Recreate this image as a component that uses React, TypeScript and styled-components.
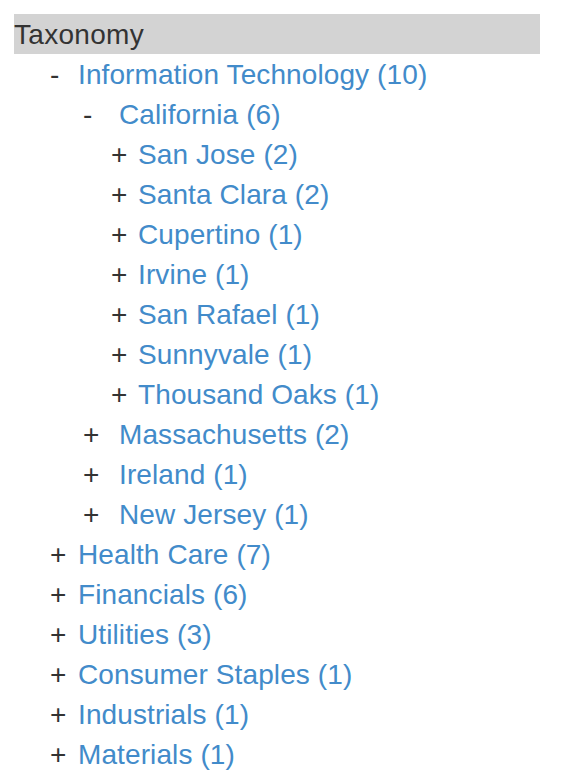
import React from "react";
import styled, { createGlobalStyle } from "styled-components";

const Global = createGlobalStyle`
  html, body { margin: 0; padding: 0; background: #fff; }
  body { font-family: "Liberation Sans", Arial, Helvetica, sans-serif; color: #333; }
`;

const Page = styled.div`
  padding: 14px;
`;

const Header = styled.div`
  width: 526px;
  height: 40px;
  line-height: 41px;
  background: #d3d3d3;
  color: #333;
  font-size: 28px;
  letter-spacing: 0.3px;
`;

const List = styled.ul`
  list-style: none;
  margin: 1px 0 0;
  padding: 0;
`;

const indents: Record<number, { left: number; toggle: number }> = {
  1: { left: 36, toggle: 28 },
  2: { left: 69, toggle: 36 },
  3: { left: 97, toggle: 27 },
};

const Row = styled.li<{ $level: number }>`
  display: flex;
  align-items: center;
  height: 40px;
  line-height: 40px;
  font-size: 28px;
  letter-spacing: 0.1px;
  padding-left: ${(p) => indents[p.$level].left}px;
`;

const Toggle = styled.span<{ $level: number }>`
  display: inline-block;
  width: ${(p) => indents[p.$level].toggle}px;
  flex: none;
  color: #333;
`;

const Label = styled.a`
  color: #428bca;
  text-decoration: none;
  white-space: nowrap;
`;

type Node = { label: string; count: number; level: number; open?: boolean };

const nodes: Node[] = [
  { label: "Information Technology", count: 10, level: 1, open: true },
  { label: "California", count: 6, level: 2, open: true },
  { label: "San Jose", count: 2, level: 3 },
  { label: "Santa Clara", count: 2, level: 3 },
  { label: "Cupertino", count: 1, level: 3 },
  { label: "Irvine", count: 1, level: 3 },
  { label: "San Rafael", count: 1, level: 3 },
  { label: "Sunnyvale", count: 1, level: 3 },
  { label: "Thousand Oaks", count: 1, level: 3 },
  { label: "Massachusetts", count: 2, level: 2 },
  { label: "Ireland", count: 1, level: 2 },
  { label: "New Jersey", count: 1, level: 2 },
  { label: "Health Care", count: 7, level: 1 },
  { label: "Financials", count: 6, level: 1 },
  { label: "Utilities", count: 3, level: 1 },
  { label: "Consumer Staples", count: 1, level: 1 },
  { label: "Industrials", count: 1, level: 1 },
  { label: "Materials", count: 1, level: 1 },
];

export default function App() {
  return (
    <>
      <Global />
      <Page>
        <Header>Taxonomy</Header>
        <List>
          {nodes.map((n, i) => (
            <Row key={i} $level={n.level}>
              <Toggle $level={n.level}>{n.open ? "-" : "+"}</Toggle>
              <Label href="#">
                {n.label} ({n.count})
              </Label>
            </Row>
          ))}
        </List>
      </Page>
    </>
  );
}
